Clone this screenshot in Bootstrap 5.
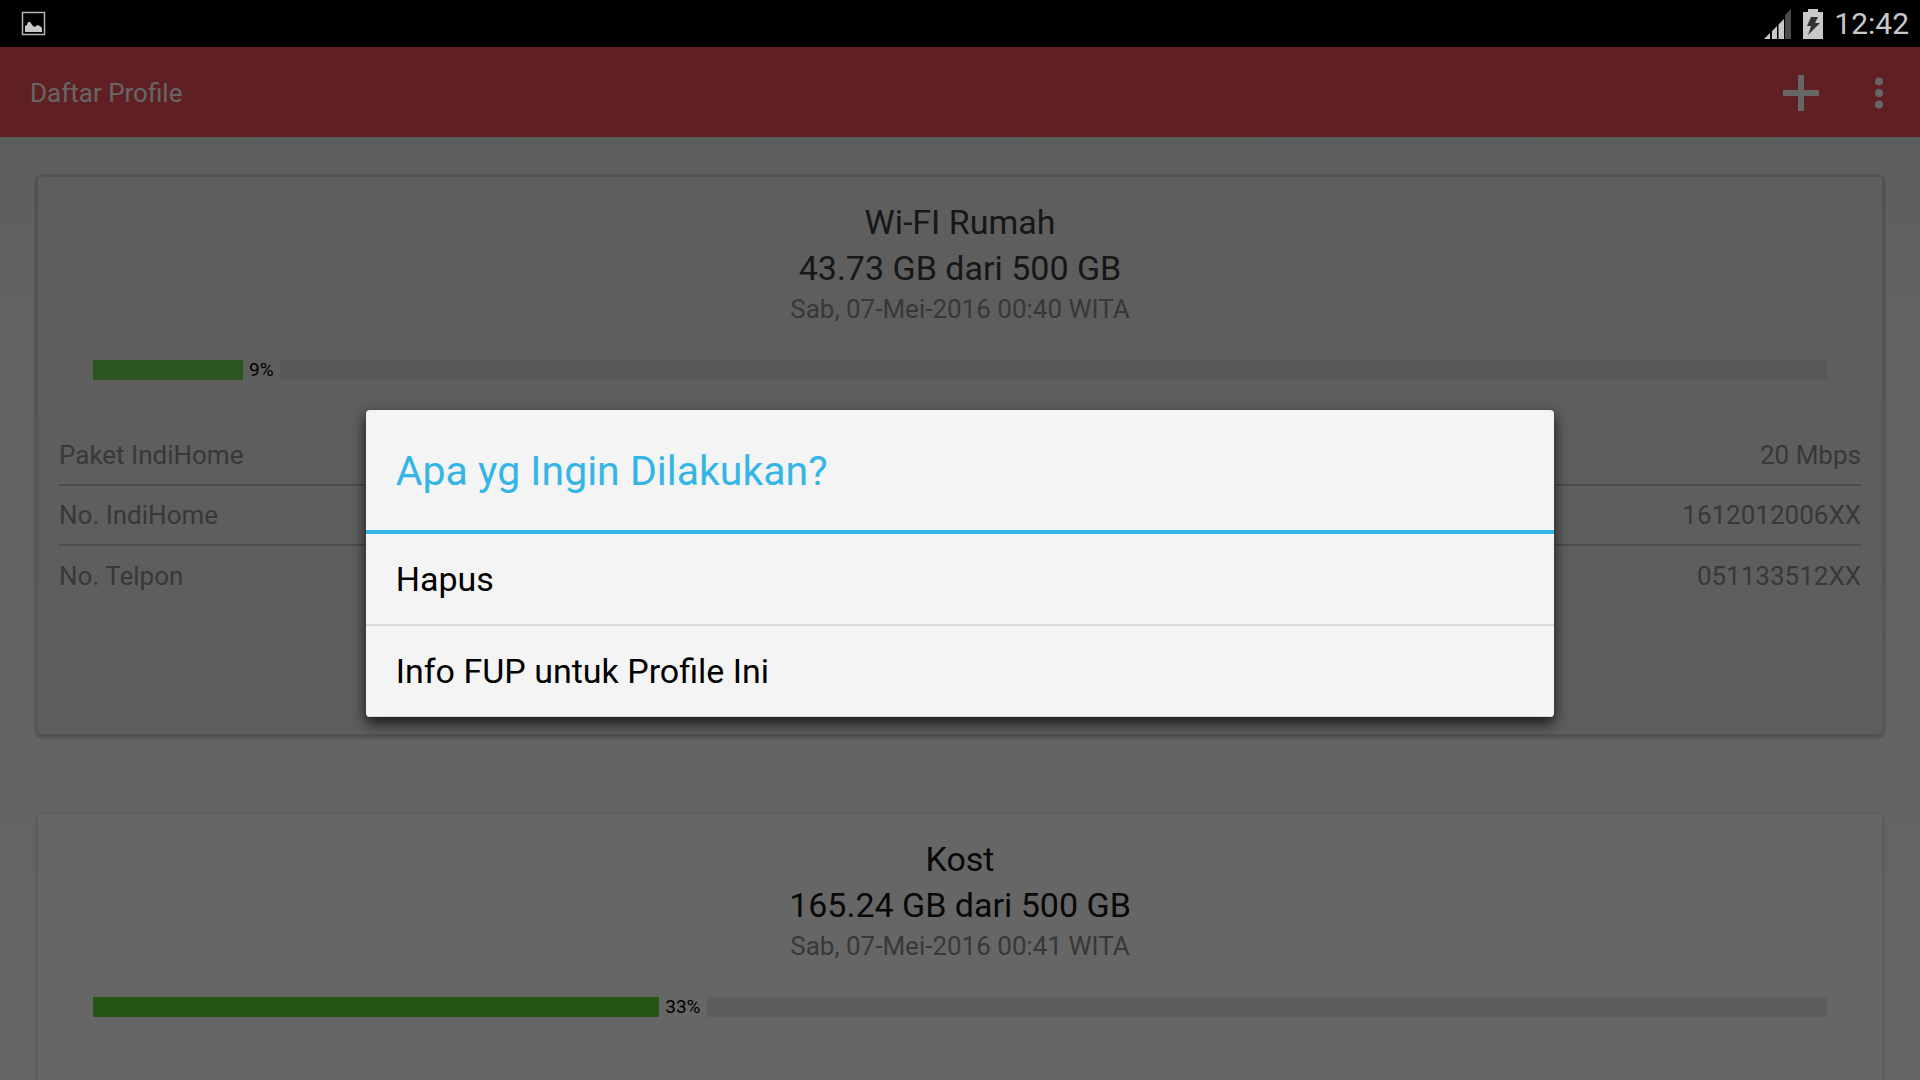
<!DOCTYPE html>
<html lang="id">
<head>
<meta charset="utf-8">
<meta name="viewport" content="width=device-width, initial-scale=1">
<title>Daftar Profile</title>
<link href="https://cdn.jsdelivr.net/npm/bootstrap@5.3.0/dist/css/bootstrap.min.css" rel="stylesheet">
<style>
  body { font-family: Roboto, "Noto Sans", sans-serif; font-size: 26px; line-height: 32px; color: #000; }
  .app-screen { height: 100vh; }
  .status-strip { height: 47px; padding: 0 11px 0 20px; background: #000; color: #c8c8c8; font-size: 30px; }
  .status-icons { gap: 11px; }
  .app-body { background: linear-gradient(#e1e9e4, #f2f4f2 25%, #f7f7f7 60%, #fcfcfc); }
  .app-bar { height: 90px; padding: 2px 23px 0 30px; background: #ee4e58; color: #fff; }
  .app-bar button { width: 36px; height: 48px; color: #fff; }
  .app-actions { gap: 42px; }
  .profile-list { padding: 40px 38px 0; gap: 80px; }
  .profile-card { min-height: 557px; padding: 22px 21px; border: 0; border-radius: 4px; background: #fff; box-shadow: 0 1px 4px rgba(0,0,0,.25); --ink: #141414; --muted: #8c8c8c; --fill: #62d43c; --track: #e3e8ee; }
  .profile-card.is-pressed { background: #ebebeb; box-shadow: 0 1px 0 4px rgba(0,0,0,.1), 0 2px 3px 1px rgba(0,0,0,.1); --ink: #3a3a3a; --fill: #70d455; --track: #d9dce2; }
  .profile-card h2, .usage { font-size: 34px; line-height: 46px; font-weight: 400; color: var(--ink); }
  .muted-text { color: var(--muted); line-height: 36px; }
  .quota { height: 20px; margin: 33px 34px 46px; gap: 6px; }
  .quota-fill, .quota-rest { height: 20px; }
  .quota-fill { background: var(--fill); }
  .quota-rest { background: var(--track); }
  .quota-label { font-size: 19px; line-height: 20px; color: #000; }
  .info-table { color: var(--muted); border-collapse: separate; border-spacing: 0; }
  .info-table th, .info-table td { height: 60px; padding: 0; font-weight: 400; }
  .info-table tr:not(:last-child) > * { border-bottom: 2px solid #bbb; }
  .dim-layer { background: rgba(0,0,0,.6); z-index: 10; }
  .action-dialog { width: 61.9%; margin: auto; background: #f4f4f4; border-radius: 4px; box-shadow: 0 6px 14px 1px rgba(0,0,0,.7); overflow: hidden; }
  .action-dialog h1 { font-size: 41px; line-height: 44px; font-weight: 400; color: #33b5e5; border-bottom: 4px solid #33b5e5; padding: 39px 30px 37px; }
  .action-dialog button { height: 90px; padding: 0 30px; font-size: 34px; color: #000; background: transparent; border: 0; text-align: left; }
  .action-dialog button + button { height: 93px; border-top: 2px solid #dadada; border-bottom: 1px solid #dadada; }
</style>
<script src="https://cdn.jsdelivr.net/npm/bootstrap@5.3.0/dist/js/bootstrap.bundle.min.js"></script>
</head>
<body>
<div class="app-screen d-flex flex-column overflow-hidden">
  <header class="status-strip d-flex align-items-center justify-content-between flex-shrink-0">
    <svg width="26" height="26" viewBox="0 0 26 26" aria-hidden="true"><rect x="2.500" y="1.500" width="22" height="22" fill="none" stroke="#b4b4b4" stroke-width="1.500"/><path d="M5 21v-6l2-1 1-3 2 0 3 4 2 1 2-2 3 1 2 2v4z" fill="#c8c8c8"/></svg>
    <div class="status-icons d-flex align-items-center">
      <svg width="28" height="30" viewBox="0 0 28 30" aria-hidden="true"><path d="M0 30l6-6v6zM8 30V22l5-5v13zM14.500 30V15.500L20 10v20z" fill="#c8c8c8"/><path d="M21 30V6l6-6v30z" fill="#4a4a4a"/></svg>
      <svg width="20" height="30" viewBox="0 0 20 30" aria-hidden="true"><path d="M5 0h10v3h5v27H0V3h5z" fill="#c8c8c8"/><path d="M8 8h7l-3 6h5L5 26l3-9H4z" fill="#333"/></svg>
      <time>12:42</time>
    </div>
  </header>
  <div class="app-body position-relative flex-grow-1 overflow-hidden">
    <nav class="app-bar d-flex align-items-center justify-content-between">
      <span>Daftar Profile</span>
      <div class="app-actions d-flex align-items-center">
        <button type="button" class="btn p-0 border-0 d-flex align-items-center justify-content-center" aria-label="Tambah profile"><svg width="36" height="36" viewBox="0 0 36 36"><path d="M15 0h6v15h15v6H21v15h-6V21H0v-6h15z" fill="currentColor"/></svg></button>
        <button type="button" class="btn p-0 border-0 d-flex align-items-center justify-content-center" aria-label="Menu lainnya"><svg width="10" height="34" viewBox="0 0 10 34"><g fill="currentColor"><circle cx="5" cy="5.500" r="4"/><circle cx="5" cy="17" r="4"/><circle cx="5" cy="28.500" r="4"/></g></svg></button>
      </div>
    </nav>
    <main class="profile-list d-flex flex-column">
      <article class="profile-card is-pressed card">
        <div class="text-center">
          <h2 class="mb-0">Wi-FI Rumah</h2>
          <div class="usage">43.73 GB dari 500 GB</div>
          <div class="muted-text">Sab, 07-Mei-2016 00:40 WITA</div>
        </div>
        <div class="quota d-flex">
          <div class="quota-fill" style="width: calc(9% - 6px)"></div><span class="quota-label">9%</span><div class="quota-rest flex-grow-1"></div>
        </div>
        <table class="info-table w-100">
          <tr><th scope="row">Paket IndiHome</th><td class="text-end">20 Mbps</td></tr>
          <tr><th scope="row">No. IndiHome</th><td class="text-end">1612012006XX</td></tr>
          <tr><th scope="row">No. Telpon</th><td class="text-end">051133512XX</td></tr>
        </table>
      </article>
      <article class="profile-card card">
        <div class="text-center">
          <h2 class="mb-0">Kost</h2>
          <div class="usage">165.24 GB dari 500 GB</div>
          <div class="muted-text">Sab, 07-Mei-2016 00:41 WITA</div>
        </div>
        <div class="quota d-flex">
          <div class="quota-fill" style="width: calc(33% - 6px)"></div><span class="quota-label">33%</span><div class="quota-rest flex-grow-1"></div>
        </div>
      </article>
    </main>
    <div class="dim-layer position-absolute top-0 start-0 w-100 h-100 d-flex">
      <section class="action-dialog d-flex flex-column" role="dialog" aria-modal="true" aria-labelledby="dialogTitle">
        <h1 id="dialogTitle" class="mb-0">Apa yg Ingin Dilakukan?</h1>
        <button type="button">Hapus</button>
        <button type="button">Info FUP untuk Profile Ini</button>
      </section>
    </div>
  </div>
</div>
</body>
</html>
